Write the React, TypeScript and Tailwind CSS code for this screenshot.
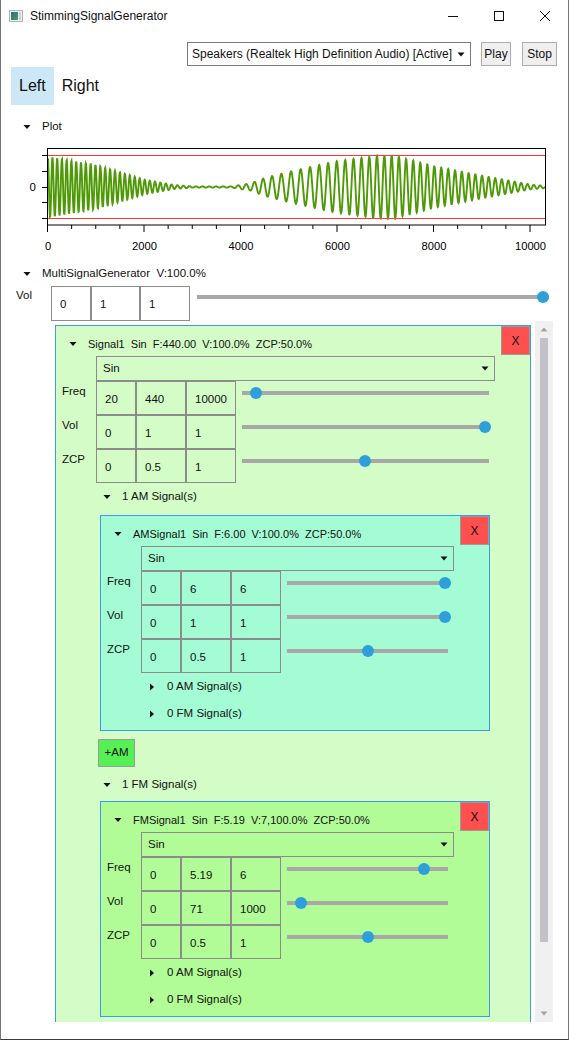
import React from 'react';

type Row = { label: string; vals: [string, string, string]; pos: number };

// envelope / period samples read off the plot
const ENV: [number, number][] = [
  [0, 1], [1000, 0.72], [2000, 0.24], [2600, 0.07], [3000, 0.02], [3800, 0.02], [4200, 0.12],
  [4500, 0.3], [5000, 0.5], [5500, 0.68], [6000, 0.85], [6800, 1.02], [7200, 1.02], [8000, 0.68],
  [9000, 0.37], [10000, 0.08], [10400, 0.02],
];
const PER: [number, number][] = [[0, 4.7], [2000, 5.0], [3500, 7], [5000, 9.8], [7000, 7.3], [10400, 6.2]];

function lerp(pts: [number, number][], s: number) {
  for (let i = 1; i < pts.length; i++) {
    if (s <= pts[i][0]) {
      const [x0, y0] = pts[i - 1];
      const [x1, y1] = pts[i];
      return y0 + ((s - x0) / (x1 - x0)) * (y1 - y0);
    }
  }
  return pts[pts.length - 1][1];
}

function wavePath() {
  let d = '';
  let phase = Math.PI / 2;
  const step = 0.25;
  for (let px = 0; px <= 497; px += step) {
    const s = px / 0.04825;
    phase += (2 * Math.PI * step) / lerp(PER, s);
    const y = 187 - 30.5 * lerp(ENV, s) * Math.sin(phase);
    d += `${px === 0 ? 'M' : 'L'}${(48 + px).toFixed(2)} ${y.toFixed(2)}`;
  }
  return d;
}

const WAVE = wavePath();

function Plot() {
  const ticks = Array.from({ length: 21 }, (_, i) => i * 500);
  return (
    <svg className="block" width="567" height="122" viewBox="1 140 567 122">
      <path d={WAVE} fill="none" stroke="#4e9a06" strokeWidth="1.9" />
      <rect x="47.5" y="148.5" width="498" height="76.5" fill="none" stroke="#000" />
      {[155.5, 171.5, 187.5, 202.5, 218.5].map((y) => (
        <line key={y} x1="42" y1={y} x2="48" y2={y} stroke="#000" />
      ))}
      <line x1="48" y1="155.5" x2="545" y2="155.5" stroke="#ff3636" />
      <line x1="48" y1="218.5" x2="545" y2="218.5" stroke="#ff3636" />
      <text x="36" y="191" textAnchor="end" fontSize="11.5" fontFamily="Liberation Sans, Arial, sans-serif">0</text>
      {ticks.map((t) => {
        const x = 47.5 + t * 0.04825;
        const major = t % 2000 === 0;
        return <line key={t} x1={x} y1="225" x2={x} y2={major ? 232 : 229} stroke="#000" />;
      })}
      {[0, 2000, 4000, 6000, 8000, 10000].map((t) => (
        <text key={t} x={48 + t * 0.04825} y="249.5" textAnchor="middle" fontSize="11.2" fontFamily="Liberation Sans, Arial, sans-serif">
          {t}
        </text>
      ))}
    </svg>
  );
}

function Arrow({ open }: { open: boolean }) {
  return (
    <svg width="8" height="8" viewBox="0 0 8 8" className="shrink-0">
      {open ? <polygon points="0.5,2 7.5,2 4,6" fill="#111" /> : <polygon points="2,0.5 6,4 2,7.5" fill="#111" />}
    </svg>
  );
}

function ExpHeader({ open, text, className }: { open: boolean; text: string; className: string }) {
  return (
    <div className={`flex items-center ${className}`}>
      <Arrow open={open} />
      <span className="ml-[11px] whitespace-pre">{text}</span>
    </div>
  );
}

function Slider({ pos }: { pos: number }) {
  return (
    <div className="relative h-[4px] bg-[#a8a8a8]">
      <div
        className="absolute top-[-4px] -ml-[6px] w-[12px] h-[12px] rounded-full bg-[#2f9fda]"
        style={{ left: `${pos}px` }}
      />
    </div>
  );
}

function ComboArrow() {
  return (
    <svg width="8" height="5" viewBox="0 0 8 5">
      <polygon points="0.5,0.5 7.5,0.5 4,4.5" fill="#111" />
    </svg>
  );
}

function ParamRow({ row }: { row: Row }) {
  return (
    <div className="flex">
      <div className="w-[40px] pl-[6px] pt-[1px] leading-[18px]">{row.label}</div>
      <div className="w-[40px] h-[34px] border border-[#8c8c8c] flex items-center pl-[8px] pt-[4px]">{row.vals[0]}</div>
      <div className="w-[50px] h-[34px] border border-[#8c8c8c] flex items-center pl-[8px] pt-[4px]">{row.vals[1]}</div>
      <div className="w-[50px] h-[34px] border border-[#8c8c8c] flex items-center pl-[8px] pt-[4px]">{row.vals[2]}</div>
      <div className="flex-1 ml-[6px] mr-[41px] pt-[10px]">
        <Slider pos={row.pos} />
      </div>
    </div>
  );
}

function SignalPanel({
  title,
  bg,
  rows,
  className,
  children,
}: {
  title: string;
  bg: string;
  rows: Row[];
  className: string;
  children: React.ReactNode;
}) {
  return (
    <div className={`relative border border-[#3d9bef] ${bg} ${className}`}>
      <div className="absolute top-0 right-0 w-[29px] h-[29px] bg-[#ff5050] border border-[#9b9b9b] flex items-center justify-center text-[12px]">
        X
      </div>
      <ExpHeader open text={title} className="h-[22px] mt-[7px] ml-[13px] text-[11px]" />
      <div className="h-[25px] mt-[1px] ml-[40px] mr-[35px] border border-[#8c8c8c] flex items-center justify-between pl-[6px] pr-[5px]">
        <span>Sin</span>
        <ComboArrow />
      </div>
      {rows.map((r) => (
        <ParamRow key={r.label} row={r} />
      ))}
      {children}
    </div>
  );
}

function SubSignals() {
  return (
    <div className="ml-[44px] pb-[3px]">
      <ExpHeader open={false} text="0 AM Signal(s)" className="h-[27px] pl-[3px]" />
      <ExpHeader open={false} text="0 FM Signal(s)" className="h-[27px] pl-[3px]" />
    </div>
  );
}

function WinGlyph({ kind }: { kind: 'min' | 'max' | 'close' }) {
  return (
    <div className="w-[46px] h-full flex items-center justify-center">
      <svg width="10" height="10" viewBox="0 0 10 10">
        {kind === 'min' && <line x1="0" y1="5.5" x2="10" y2="5.5" stroke="#111" />}
        {kind === 'max' && <rect x="0.5" y="0.5" width="9" height="9" fill="none" stroke="#111" />}
        {kind === 'close' && (
          <g stroke="#111">
            <line x1="0" y1="0" x2="10" y2="10" />
            <line x1="10" y1="0" x2="0" y2="10" />
          </g>
        )}
      </svg>
    </div>
  );
}

export default function App() {
  return (
    <div className="w-[569px] h-[1040px] bg-white border-x border-b border-x-[#767676] border-b-[#3e3a38] overflow-hidden text-[11.5px] text-[#111] font-['Liberation_Sans',Arial,sans-serif]">
      {/* title bar */}
      <div className="flex items-center h-[31px] text-[12px]">
        <svg width="14" height="12" viewBox="0 0 14 12" className="ml-[8px]">
          <rect x="0.5" y="0.5" width="13" height="11" fill="#eef1f3" stroke="#b4b4b4" />
          <defs>
            <linearGradient id="ig" x1="0" y1="0" x2="1" y2="1">
              <stop offset="0" stopColor="#2c6c86" />
              <stop offset="1" stopColor="#4f9d5b" />
            </linearGradient>
          </defs>
          <rect x="2" y="2" width="7" height="8" fill="url(#ig)" />
          <rect x="10" y="2" width="2" height="8" fill="#c9d7e0" />
        </svg>
        <span className="ml-[7px]">StimmingSignalGenerator</span>
        <div className="flex-1" />
        <WinGlyph kind="min" />
        <WinGlyph kind="max" />
        <WinGlyph kind="close" />
      </div>

      {/* device row */}
      <div className="flex justify-end mt-[11px] mr-[11px] h-[24px] text-[12px]">
        <div className="w-[284px] h-full bg-white border border-[#7a7a7a] flex items-center justify-between pl-[4px] pr-[5px]">
          <span className="whitespace-nowrap">Speakers (Realtek High Definition Audio) [Active]</span>
          <ComboArrow />
        </div>
        <div className="ml-[10px] w-[30px] h-full bg-[#efefef] border border-[#adadad] flex items-center justify-center">Play</div>
        <div className="ml-[11px] w-[35px] h-full bg-[#efefef] border border-[#adadad] flex items-center justify-center">Stop</div>
      </div>

      {/* tabs */}
      <div className="flex mt-[1px] ml-[10px] h-[38px] text-[16px]">
        <div className="px-[8px] bg-[#cce8f6] flex items-center">Left</div>
        <div className="px-[8px] flex items-center">Right</div>
      </div>

      <ExpHeader open text="Plot" className="mt-[9px] h-[26px] ml-[22px]" />
      <Plot />

      <ExpHeader open text="MultiSignalGenerator  V:100.0%" className="h-[24px] ml-[22px]" />
      <div className="flex h-[35px]">
        <div className="w-[50px] pl-[15px] pt-[1px]">Vol</div>
        <div className="w-[40px] h-[35px] border border-[#8c8c8c] flex items-center pl-[8px] pt-[3px]">0</div>
        <div className="w-[49px] h-[35px] border border-[#8c8c8c] flex items-center pl-[8px] pt-[3px]">1</div>
        <div className="w-[50px] h-[35px] border border-[#8c8c8c] flex items-center pl-[8px] pt-[3px]">1</div>
        <div className="flex-1 ml-[7px] mr-[19px] pt-[9px]">
          <Slider pos={346} />
        </div>
      </div>

      {/* scroll viewer */}
      <div className="flex ml-[54px] h-[701px]">
        <div className="w-[476px] h-full overflow-hidden">
          <SignalPanel
            title="Signal1  Sin  F:440.00  V:100.0%  ZCP:50.0%"
            bg="bg-[#d3fcc6]"
            className="mt-[4px] border-b-0"
            rows={[
              { label: 'Freq', vals: ['20', '440', '10000'], pos: 14 },
              { label: 'Vol', vals: ['0', '1', '1'], pos: 243 },
              { label: 'ZCP', vals: ['0', '0.5', '1'], pos: 123 },
            ]}
          >
            <div className="ml-[44px] mr-[40px] pb-[20px]">
              <ExpHeader open text="1 AM Signal(s)" className="h-[27px] pl-[3px]" />
              <SignalPanel
                title="AMSignal1  Sin  F:6.00  V:100.0%  ZCP:50.0%"
                bg="bg-[#a4fcd4]"
                className="mt-[5px]"
                rows={[
                  { label: 'Freq', vals: ['0', '6', '6'], pos: 158 },
                  { label: 'Vol', vals: ['0', '1', '1'], pos: 158 },
                  { label: 'ZCP', vals: ['0', '0.5', '1'], pos: 81 },
                ]}
              >
                <SubSignals />
              </SignalPanel>
              <div className="mt-[8px] -ml-[2px] w-[37px] h-[28px] bg-[#56f056] border border-[#9b9b9b] flex items-center justify-center">
                +AM
              </div>
              <ExpHeader open text="1 FM Signal(s)" className="mt-[4px] h-[27px] pl-[3px]" />
              <SignalPanel
                title="FMSignal1  Sin  F:5.19  V:7,100.0%  ZCP:50.0%"
                bg="bg-[#b1fc96]"
                className="mt-[3px]"
                rows={[
                  { label: 'Freq', vals: ['0', '5.19', '6'], pos: 137 },
                  { label: 'Vol', vals: ['0', '71', '1000'], pos: 14 },
                  { label: 'ZCP', vals: ['0', '0.5', '1'], pos: 81 },
                ]}
              >
                <SubSignals />
              </SignalPanel>
            </div>
          </SignalPanel>
        </div>

        {/* scrollbar */}
        <div className="ml-[4px] w-[18px] h-full bg-[#f0f0f0] flex flex-col items-center">
          <div className="h-[17px] flex items-center justify-center">
            <svg width="8" height="5" viewBox="0 0 8 5">
              <polygon points="0.5,4.5 7.5,4.5 4,0.5" fill="#a3a3a3" />
            </svg>
          </div>
          <div className="w-[8px] h-[604px] bg-[#c2c3c8]" />
          <div className="flex-1" />
          <div className="h-[17px] flex items-center justify-center">
            <svg width="8" height="5" viewBox="0 0 8 5">
              <polygon points="0.5,0.5 7.5,0.5 4,4.5" fill="#a3a3a3" />
            </svg>
          </div>
        </div>
      </div>
    </div>
  );
}
